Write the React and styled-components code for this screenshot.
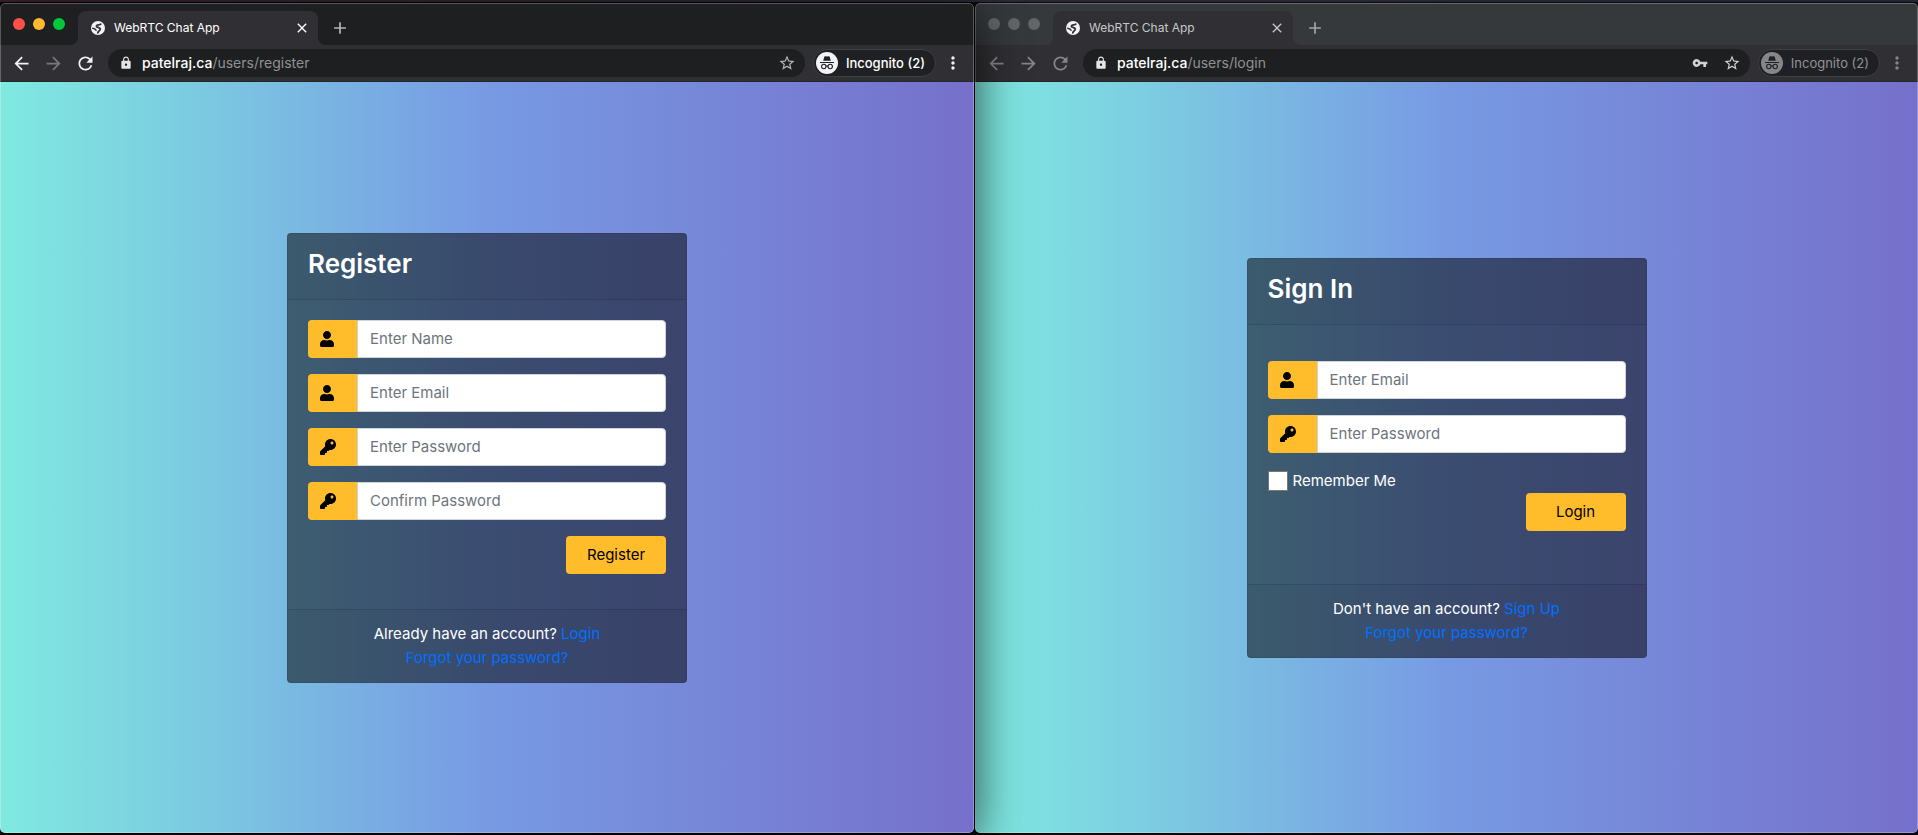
import React, { useId } from "react";
import styled, { createGlobalStyle, css } from "styled-components";
import { FaUser, FaKey } from "react-icons/fa";
import {
  MdArrowBack,
  MdArrowForward,
  MdRefresh,
  MdLock,
  MdStarBorder,
  MdVpnKey,
  MdMoreVert,
  MdClose,
  MdAdd,
} from "react-icons/md";

const GlobalStyle = createGlobalStyle`
  *, *::before, *::after { box-sizing: border-box; }
  body {
    margin: 0;
    font-family: Inter, "Liberation Sans", sans-serif;
    font-size: 15px;
    line-height: 24px;
    color: #fff;
    background: #0c0808;
  }
  button, input { font: inherit; }
  svg { display: block; flex: none; }
`;

const Desktop = styled.div`
  display: grid;
  grid-template-columns: 974fr 943fr;
  gap: 1px;
  min-height: 100vh;
  padding: 3px 0 2px;
  background: linear-gradient(to right, #3d232c, #2b2838 50%, #1f2438) top / 100% 2px no-repeat, #0c0808;
`;

const Window = styled.section`
  position: relative;
  z-index: ${(p) => (p.$active ? 1 : 0)};
  display: flex;
  flex-direction: column;
  min-width: 0;
  overflow: hidden;
  border-radius: 5px;
  ${(p) => p.$active && css`box-shadow: 0 0 0 1px #000, 0 10px 50px rgba(0, 0, 0, 0.75);`}

  &::after {
    content: "";
    position: absolute;
    inset: 0;
    border: 1px solid rgba(255, 255, 255, 0.26);
    border-radius: inherit;
    pointer-events: none;
  }
`;

const TabStrip = styled.div`
  display: flex;
  height: 42px;
  padding: 8px 0 0 13px;
  background: ${(p) => (p.$active ? "#1e1f21" : "#35393b")};
`;

const Lights = styled.div`
  display: flex;
  gap: 8px;
  padding-top: 7px;
  margin-right: 13px;
`;

const Light = styled.span`
  width: 12px;
  height: 12px;
  border-radius: 50%;
  background: ${(p) => p.$color};
`;

const Tab = styled.div`
  position: relative;
  display: flex;
  align-items: center;
  width: 240px;
  padding: 0 8px 0 13px;
  font-size: 12px;
  line-height: 16px;
  color: ${(p) => (p.$active ? "#fff" : "#c6c7c9")};
  background: #303034;
  border-radius: 8px 8px 0 0;

  &::before,
  &::after {
    content: "";
    position: absolute;
    bottom: 0;
    width: 8px;
    height: 8px;
  }
  &::before {
    left: -8px;
    background: radial-gradient(circle at 0 0, transparent 8px, #303034 8px);
  }
  &::after {
    right: -8px;
    background: radial-gradient(circle at 100% 0, transparent 8px, #303034 8px);
  }
`;

const TabTitle = styled.span`
  flex: 1;
  padding-left: 9px;
`;

const IconButton = styled.button`
  display: flex;
  align-items: center;
  justify-content: center;
  width: ${(p) => p.$size || 16}px;
  height: ${(p) => p.$size || 16}px;
  padding: 0;
  border: 0;
  background: none;
  color: ${(p) => p.$color};
  flex: none;
`;

const NewTab = styled(IconButton)`
  align-self: center;
  margin-left: 12px;
`;

const Toolbar = styled.div`
  display: flex;
  align-items: center;
  height: 37px;
  padding: 0 11px;
  background: #303034;
  border-bottom: 1px solid #242527;
`;

const NavButtons = styled.div`
  display: flex;
  gap: 11px;
`;

const AddressBar = styled.div`
  display: flex;
  align-items: center;
  flex: 1;
  min-width: 0;
  height: 28px;
  margin: 0 8px 0 12px;
  padding: 0 9px 0 11px;
  gap: 14px;
  border-radius: 14px;
  background: #1e1f21;
  color: #e4e5e7;
`;

const Url = styled.span`
  flex: 1;
  margin-left: -5px;
  font-size: 14px;
  line-height: 20px;
  color: #909194;
  white-space: nowrap;

  b {
    font-weight: 500;
    color: #fff;
  }
`;

const Profile = styled.button`
  display: flex;
  align-items: center;
  gap: 8px;
  height: 28px;
  margin-right: 7px;
  padding: 0 10px 0 2px;
  border: 1px solid #3e3f43;
  border-radius: 14px;
  background: #1f2023;
  font-size: 13px;
  line-height: 18px;
  font-weight: ${(p) => (p.$active ? 500 : 400)};
  color: ${(p) => (p.$active ? "#fff" : "#919295")};
  white-space: nowrap;
`;

const Page = styled.main`
  flex: 1;
  display: flex;
  align-items: center;
  justify-content: center;
  padding: 20px;
  background: linear-gradient(to right, #7feae0, #779ae3 50%, #7670cb);
`;

const Card = styled.form`
  display: flex;
  flex-direction: column;
  width: 400px;
  max-width: 100%;
  min-height: ${(p) => (p.$tall ? 450 : 400)}px;
  border: 1px solid rgba(0, 0, 0, 0.12);
  border-radius: 4px;
  background: rgba(0, 0, 0, 0.5);
`;

const CardHeader = styled.header`
  padding: 13px 20px 19px;
  border-bottom: 1px solid rgba(0, 0, 0, 0.12);
  background: rgba(0, 0, 0, 0.03);
`;

const Title = styled.h1`
  margin: 0;
  font-size: 26px;
  line-height: 33px;
  font-weight: 600;
`;

const CardBody = styled.div`
  flex: 1;
  display: flex;
  flex-direction: column;
  padding: ${(p) => (p.$spaced ? 36 : 20)}px 20px 20px;
`;

const InputGroup = styled.label`
  display: flex;
  height: 38px;
  margin-bottom: 16px;
`;

const Prepend = styled.span`
  display: flex;
  align-items: center;
  width: 49px;
  padding-left: 12px;
  border-radius: 4px 0 0 4px;
  background: #ffbd2b;
  color: #000;

  svg {
    width: ${(p) => p.$iconWidth}px;
    height: 16px;
  }
`;

const TextInput = styled.input`
  flex: 1;
  min-width: 0;
  padding: 6px 12px;
  border: 1px solid #ced4da;
  border-radius: 0 4px 4px 0;
  background: #fff;
  color: #495057;

  &::placeholder {
    color: #6c757d;
    opacity: 1;
  }
`;

const Remember = styled.label`
  display: flex;
  align-items: center;
  gap: 5px;
  height: 24px;
`;

const Checkbox = styled.input`
  appearance: none;
  width: 20px;
  height: 20px;
  margin: 0;
  border: 1px solid #767676;
  background: #fff;
`;

const Submit = styled.button`
  align-self: flex-end;
  width: 100px;
  height: 38px;
  padding: 0;
  border: 0;
  border-radius: 4px;
  background: #ffbd2b;
  color: #000;
`;

const CardFooter = styled.footer`
  padding: 12px 20px;
  border-top: 1px solid rgba(0, 0, 0, 0.12);
  background: rgba(0, 0, 0, 0.03);
  text-align: center;
`;

const Link = styled.a`
  color: #0070ff;
  text-decoration: none;
`;

const Globe = () => (
  <svg width="14" height="14" viewBox="0 0 14 14" aria-hidden="true">
    <circle cx="7" cy="7" r="7" fill="#f1f3f4" />
    <g fill="none" stroke="#303034" strokeLinecap="round">
      <path d="M9.800 3.200C8.600 4.400 6 3.400 5.400 5.100 5 6.800 8.900 6.100 9.300 8 9.500 9.400 7.400 9.600 6.800 11.800" strokeWidth="1.800" />
      <path d="M1.800 7.300C3.200 7.400 4.300 8 5 9.200" strokeWidth="1.600" />
    </g>
  </svg>
);

const Incognito = ({ color }) => (
  <svg width="22" height="22" viewBox="0 0 22 22" aria-hidden="true">
    <circle cx="11" cy="11" r="11" fill={color} />
    <path d="M7.200 8.800 8.300 4.800c.2-.6.700-.8 1.200-.6l1.500.4 1.500-.4c.5-.2 1 0 1.200.6l1.100 4z" fill="#202124" />
    <path d="M4 10.500h14" stroke="#202124" strokeWidth="1.200" />
    <g fill="none" stroke="#202124" strokeWidth="1.100">
      <circle cx="7.800" cy="14.500" r="2.200" />
      <circle cx="14.200" cy="14.500" r="2.200" />
      <path d="M10 14.300c.6-.5 1.400-.5 2 0" />
    </g>
  </svg>
);

function Field({ icon: Icon, iconWidth = 16, type = "text", label }) {
  const id = useId();
  return (
    <InputGroup htmlFor={id}>
      <Prepend $iconWidth={iconWidth}>
        <Icon />
      </Prepend>
      <TextInput id={id} type={type} placeholder={label} aria-label={label} />
    </InputGroup>
  );
}

const UserField = (props) => <Field icon={FaUser} iconWidth={14} {...props} />;
const PasswordField = (props) => <Field icon={FaKey} type="password" {...props} />;

function BrowserWindow({ active, path, savedKey, children }) {
  const lights = active ? ["#ff4f4a", "#ffb830", "#02c83c"] : ["#636567", "#636567", "#636567"];
  const bright = active ? "#f1f2f3" : "#85868a";
  const star = active ? "#b6b7b9" : "#d0d1d3";
  return (
    <Window $active={active}>
      <TabStrip $active={active}>
        <Lights>
          {lights.map((c, i) => (
            <Light key={i} $color={c} />
          ))}
        </Lights>
        <Tab $active={active}>
          <Globe />
          <TabTitle>WebRTC Chat App</TabTitle>
          <IconButton aria-label="Close tab" $color={active ? "#fff" : "#c6c7c9"}>
            <MdClose size={16} />
          </IconButton>
        </Tab>
        <NewTab aria-label="New tab" $size={20} $color={active ? "#b6b7b9" : "#a4a6a8"}>
          <MdAdd size={20} />
        </NewTab>
      </TabStrip>
      <Toolbar>
        <NavButtons>
          <IconButton aria-label="Back" $size={21} $color={bright}>
            <MdArrowBack size={21} />
          </IconButton>
          <IconButton aria-label="Forward" $size={21} $color={active ? "#77787b" : "#85868a"}>
            <MdArrowForward size={21} />
          </IconButton>
          <IconButton aria-label="Reload" $size={21} $color={bright}>
            <MdRefresh size={21} />
          </IconButton>
        </NavButtons>
        <AddressBar>
          <MdLock size={14} />
          <Url>
            <b>patelraj.ca</b>
            {path}
          </Url>
          {savedKey && (
            <IconButton aria-label="Saved passwords" $size={18} $color="#d0d1d3">
              <MdVpnKey size={16} />
            </IconButton>
          )}
          <IconButton aria-label="Bookmark" $size={18} $color={star}>
            <MdStarBorder size={18} />
          </IconButton>
        </AddressBar>
        <Profile $active={active}>
          <Incognito color={active ? "#f1f3f4" : "#85868a"} />
          Incognito (2)
        </Profile>
        <IconButton aria-label="Menu" $size={20} $color={bright}>
          <MdMoreVert size={20} />
        </IconButton>
      </Toolbar>
      <Page>{children}</Page>
    </Window>
  );
}

export default function App() {
  return (
    <>
      <GlobalStyle />
      <Desktop>
        <BrowserWindow active path="/users/register">
          <Card $tall>
            <CardHeader>
              <Title>Register</Title>
            </CardHeader>
            <CardBody>
              <UserField label="Enter Name" />
              <UserField label="Enter Email" />
              <PasswordField label="Enter Password" />
              <PasswordField label="Confirm Password" />
              <Submit type="button">Register</Submit>
            </CardBody>
            <CardFooter>
              <div>
                Already have an account? <Link href="#login">Login</Link>
              </div>
              <Link href="#forgot">Forgot your password?</Link>
            </CardFooter>
          </Card>
        </BrowserWindow>
        <BrowserWindow path="/users/login" savedKey>
          <Card>
            <CardHeader>
              <Title>Sign In</Title>
            </CardHeader>
            <CardBody $spaced>
              <UserField label="Enter Email" />
              <PasswordField label="Enter Password" />
              <Remember>
                <Checkbox type="checkbox" />
                Remember Me
              </Remember>
              <Submit type="button">Login</Submit>
            </CardBody>
            <CardFooter>
              <div>
                Don't have an account? <Link href="#signup">Sign Up</Link>
              </div>
              <Link href="#forgot">Forgot your password?</Link>
            </CardFooter>
          </Card>
        </BrowserWindow>
      </Desktop>
    </>
  );
}
